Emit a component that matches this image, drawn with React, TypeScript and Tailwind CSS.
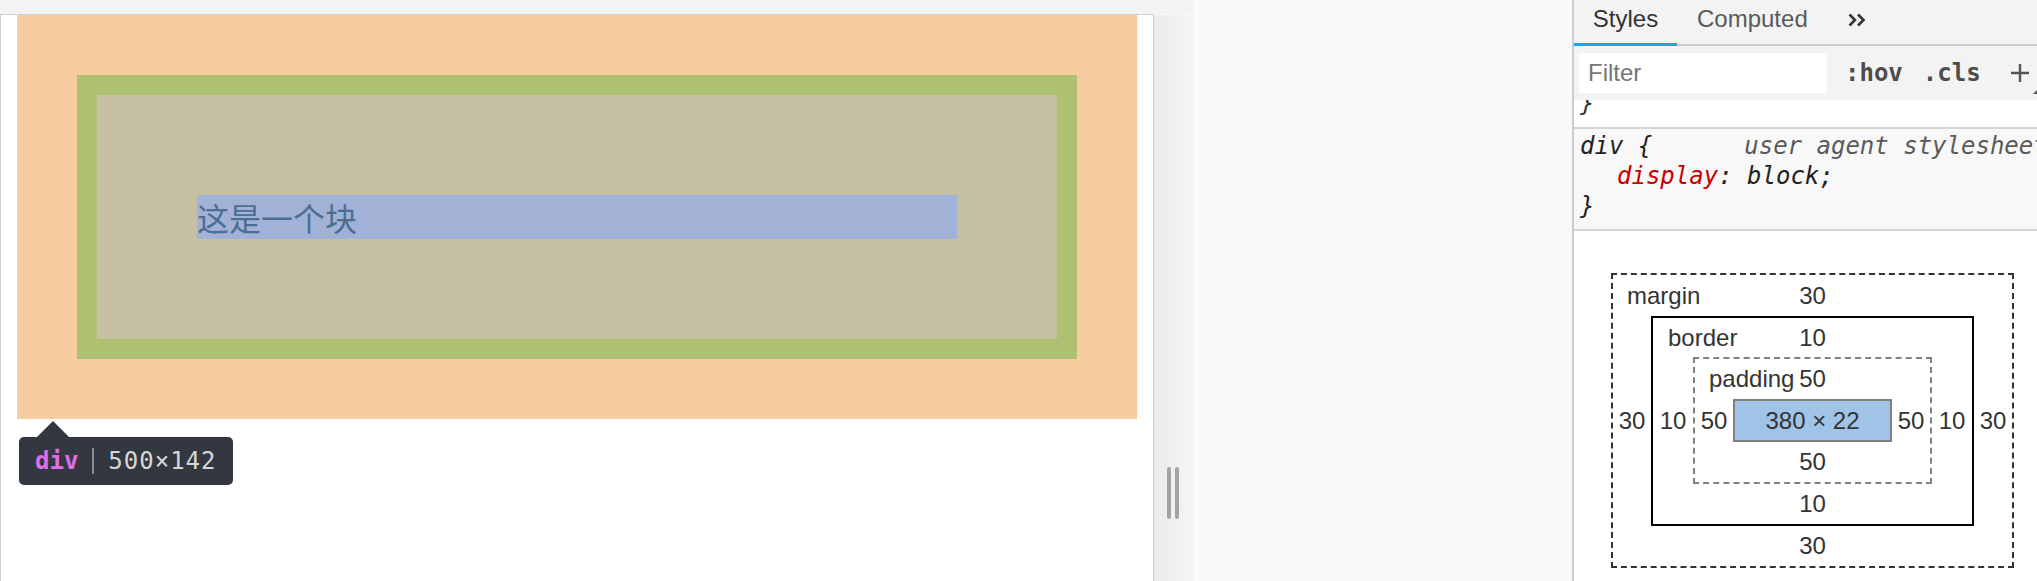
import type { ReactNode } from "react";

const sans = { fontFamily: '"Liberation Sans", Arial, sans-serif' };

type RingProps = {
	label?: string;
	values: [string, string, string, string];
	className: string;
	labelClass: string;
	topClass: string;
	bottomClass: string;
	sideClass: string;
	children: ReactNode;
};

function Ring({
	label,
	values,
	className,
	labelClass,
	topClass,
	bottomClass,
	sideClass,
	children,
}: RingProps) {
	const [top, right, bottom, left] = values;
	return (
		<div className={className}>
			<div className={`grid grid-cols-[1fr_auto_1fr] items-center ${topClass}`}>
				<span className={labelClass}>{label}</span>
				<span>{top}</span>
				<span />
			</div>
			<div className="flex items-center">
				<span className={`${sideClass} text-center`}>{left}</span>
				{children}
				<span className={`${sideClass} text-center`}>{right}</span>
			</div>
			<div className={`flex items-center justify-center ${bottomClass}`}>
				{bottom}
			</div>
		</div>
	);
}

function Page() {
	return (
		<div className="relative w-[1154px] border-l border-r border-t border-[#d2d2d2] bg-white px-[16px]">
			<div className="w-[1120px] bg-[#f6cca0] p-[60px]">
				<div className="border-[20px] border-[#adc170] bg-[#c4c0a1] p-[100px]">
					<div
						className="h-[44px] w-[760px] bg-[#a2b1d6] text-[32px] leading-[44px] text-[#4a6f90]"
						style={{ fontFamily: '"Noto Sans CJK SC", sans-serif' }}
					>
						这是一个块
					</div>
				</div>
			</div>

			{/* element tooltip */}
			<div className="absolute left-[18px] top-[406px] flex flex-col">
				<div className="ml-[18px] h-0 w-0 border-x-[16px] border-b-[16px] border-x-transparent border-b-[#333740]" />
				<div
					className="flex h-[48px] items-center rounded-[5px] bg-[#333740] px-[16px] text-[24px] leading-[48px]"
					style={{ fontFamily: '"DejaVu Sans Mono", monospace' }}
				>
					<span className="font-bold text-[#e06ee6]">div</span>
					<span className="mx-[14px] h-[26px] w-[2px] bg-[#8b8b8b]" />
					<span className="tracking-[1px] text-[#d6d6d6]">500×142</span>
				</div>
			</div>
		</div>
	);
}

function Viewport() {
	return (
		<div className="flex w-[1572px] flex-col bg-[#f9f9f9]">
			<div className="h-[14px] w-[1193px] bg-[#f3f3f3]" />
			<div className="flex flex-1">
				<Page />
				<div className="mt-[1px] flex w-[39px] gap-[4px] bg-linear-to-r from-[#ececec] to-[#f4f4f4] pl-[13px] pt-[452px]">
					<div className="h-[52px] w-[4px] rounded-full bg-[#a3a3a3]" />
					<div className="h-[52px] w-[4px] rounded-full bg-[#a3a3a3]" />
				</div>
				<div className="flex-1" />
			</div>
		</div>
	);
}

function DevTools() {
	const mono = { fontFamily: '"DejaVu Sans Mono", monospace' };
	return (
		<div className="flex w-[465px] flex-col overflow-hidden whitespace-nowrap border-l-2 border-[#cccccc] bg-white text-[24px]">
			<div className="flex h-[46px] shrink-0 bg-[#f3f3f3] leading-[24px]">
				<div className="w-[103px] border-b-[3px] border-[#1ba1f1] pt-[7px] text-center text-[#333333]">
					Styles
				</div>
				<div className="border-b-2 border-[#cccccc] px-[20px] pt-[7px] text-[#5a5a5a]">
					Computed
				</div>
				<div className="border-b-2 border-[#cccccc] pl-[20px] pt-[13px]">
					<svg width="18" height="14" viewBox="0 0 18 14" fill="none">
						<path
							d="M1.5 1.5 7 7l-5.5 5.5M10 1.5 15.5 7 10 12.5"
							stroke="#333"
							strokeWidth="2.6"
						/>
					</svg>
				</div>
				<div className="flex-1 border-b-2 border-[#cccccc]" />
			</div>

			<div className="flex h-[54px] shrink-0 items-start bg-[#f3f3f3] pl-[5px] pt-[7px]">
				<div className="flex h-[40px] w-[248px] shrink-0 items-center bg-white pl-[9px] text-[#767676]">
					Filter
				</div>
				<div
					className="ml-[18px] flex h-[40px] items-center gap-[20px] font-bold text-[#4d4d4d]"
					style={mono}
				>
					<span>:hov</span>
					<span>.cls</span>
				</div>
				<svg className="ml-[28px] mt-[10px] shrink-0" width="32" height="32" viewBox="0 0 32 32" fill="none">
					<path d="M11 1v18M2 10h18" stroke="#555" strokeWidth="2.4" />
					<path d="M30 25v6h-6z" fill="#555" />
				</svg>
			</div>

			<div className="h-[27px] shrink-0 overflow-hidden pl-[6px] italic text-[#333]" style={mono}>
				<div className="-mt-[12px] leading-[30px]">{"}"}</div>
			</div>

			<div
				className="shrink-0 border-t-2 border-[#d4d4d4] bg-[#f8f8f8] pb-[8px] pl-[6px] pt-[2px] italic leading-[30px] text-[#222]"
				style={mono}
			>
				<div className="flex">
					<span>div {"{"}</span>
					<span className="ml-[92px] text-[#5a5a5a]">user agent stylesheet</span>
				</div>
				<div className="pl-[37px]">
					<span className="text-[#c80000]">display</span>: block;
				</div>
				<div>{"}"}</div>
			</div>

			<div className="flex-1 border-t-2 border-[#d4d4d4] bg-white pl-[37px] pt-[42px] leading-[24px] text-[#333]">
				<Ring
					label="margin"
					values={["30", "30", "30", "30"]}
					className="w-[403px] border-2 border-dashed border-[#333]"
					labelClass="pl-[14px]"
					topClass="h-[41px]"
					bottomClass="h-[40px]"
					sideClass="w-[38px]"
				>
					<Ring
						label="border"
						values={["10", "10", "10", "10"]}
						className="w-[323px] border-2 border-black"
						labelClass="pl-[15px]"
						topClass="h-[39px]"
						bottomClass="h-[40px]"
						sideClass="w-[40px]"
					>
						<Ring
							label="padding"
							values={["50", "50", "50", "50"]}
							className="w-[239px] border-2 border-dashed border-[#808080]"
							labelClass="pl-[14px]"
							topClass="h-[40px]"
							bottomClass="h-[40px]"
							sideClass="w-[38px]"
						>
							<div className="flex h-[43px] w-[159px] items-center justify-center border-2 border-[#808080] bg-[#a0c4e8]">
								380 × 22
							</div>
						</Ring>
					</Ring>
				</Ring>
			</div>
		</div>
	);
}

export default function App() {
	return (
		<div className="flex h-[581px] w-[2037px] overflow-hidden bg-white" style={sans}>
			<Viewport />
			<DevTools />
		</div>
	);
}
